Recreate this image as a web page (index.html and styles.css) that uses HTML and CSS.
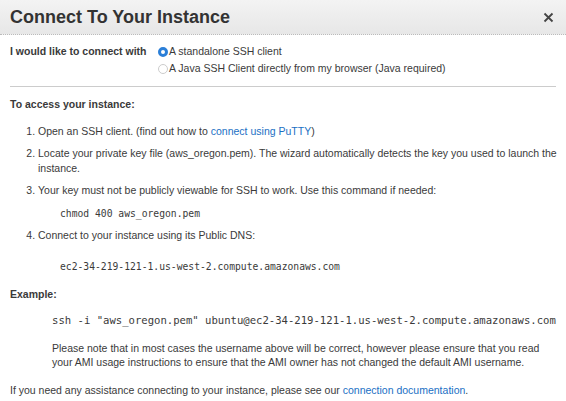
FILE: index.html
```html
<!DOCTYPE html>
<html>
<head>
<meta charset="utf-8">
<link rel="stylesheet" href="styles.css">
</head>
<body>
<div class="dialog">
  <div class="header">
    <h1 class="title">Connect To Your Instance</h1>
    <span class="close">
      <svg width="11" height="11" viewBox="0 0 11 11"><path d="M1.5 1.5 L9.5 9.5 M9.5 1.5 L1.5 9.5" stroke="#444" stroke-width="1.8" fill="none"/></svg>
    </span>
  </div>
  <div class="body">
    <div class="choose">
      <div class="choose-label">I would like to connect with</div>
      <div class="options">
        <label class="option"><span class="radio checked"></span>A standalone SSH client</label>
        <label class="option"><span class="radio"></span>A Java SSH Client directly from my browser (Java required)</label>
      </div>
    </div>
    <hr class="rule">
    <div class="heading">To access your instance:</div>
    <ol class="steps">
      <li>Open an SSH client. (find out how to <a class="link">connect using PuTTY</a>)</li>
      <li>Locate your private key file (aws_oregon.pem). The wizard automatically detects the key you used to launch the instance.</li>
      <li>Your key must not be publicly viewable for SSH to work. Use this command if needed:
        <div class="code first">chmod 400 aws_oregon.pem</div>
      </li>
      <li>Connect to your instance using its Public DNS:
        <div class="code">ec2-34-219-121-1.us-west-2.compute.amazonaws.com</div>
      </li>
    </ol>
    <div class="heading example">Example:</div>
    <div class="example-block">
      <div class="code big">ssh -i "aws_oregon.pem" ubuntu@ec2-34-219-121-1.us-west-2.compute.amazonaws.com</div>
      <p class="note">Please note that in most cases the username above will be correct, however please ensure that you read your AMI usage instructions to ensure that the AMI owner has not changed the default AMI username.</p>
    </div>
    <p class="footer">If you need any assistance connecting to your instance, please see our <a class="link">connection documentation</a>.</p>
  </div>
</div>
</body>
</html>
```
FILE: styles.css
```css
* { box-sizing: border-box; }
html, body { margin: 0; padding: 0; background: #fff; }
body {
  font-family: "Liberation Sans", Arial, Helvetica, sans-serif;
  font-size: 10.5px;
  color: #3a3a3a;
  width: 566px;
  height: 401px;
  overflow: hidden;
}
.dialog { width: 566px; }
.header {
  height: 35px;
  background: linear-gradient(#f3f3f3, #e7e7e7);
  border-bottom: 1px dotted #bbb;
  display: flex;
  align-items: center;
  justify-content: space-between;
  padding: 0 12px 0 10px;
}
.title {
  margin: 0;
  font-size: 18px;
  font-weight: bold;
  color: #333;
}
.close { display: flex; align-items: center; margin-top: 1px; }
.body { padding: 0 4px 0 10px; }
.choose {
  display: flex;
  padding-top: 8px;
}
.choose-label {
  width: 148px;
  font-weight: bold;
  line-height: 17px;
}
.options { display: flex; flex-direction: column; }
.option {
  display: flex;
  align-items: center;
  line-height: 17px;
}
.radio {
  width: 10px;
  height: 10px;
  border-radius: 50%;
  border: 1px solid #ccc;
  background: #fff;
  margin-right: 1px;
}
.radio.checked {
  border: 3px solid #2b7fd8;
  background: #fff;
}
.rule {
  border: 0;
  border-top: 1px solid #ccc;
  margin: 9px 6px 0 0;
}
.heading {
  font-weight: bold;
  line-height: 15px;
  margin-top: 10px;
}
.steps {
  margin: 12px 0 0 0;
  padding-left: 28px;
}
.steps li {
  line-height: 15px;
  margin-bottom: 7px;
}
.code {
  font-family: "DejaVu Sans Mono", "Liberation Mono", monospace;
  font-size: 9.7px;
  line-height: 15px;
  margin: 16px 0 7px 22px;
}
.code.first { margin-top: 8px; }
.link { color: #1a6fc4; }
.example { margin-top: 13px; }
.example-block { padding-left: 42px; }
.code.big {
  font-size: 10.6px;
  margin: 11px 0 0 0;
}
.note {
  max-width: 500px;
  margin: 13px 0 0 0;
  line-height: 14px;
}
.footer {
  margin: 14px 0 0 0;
  line-height: 15px;
}
```
